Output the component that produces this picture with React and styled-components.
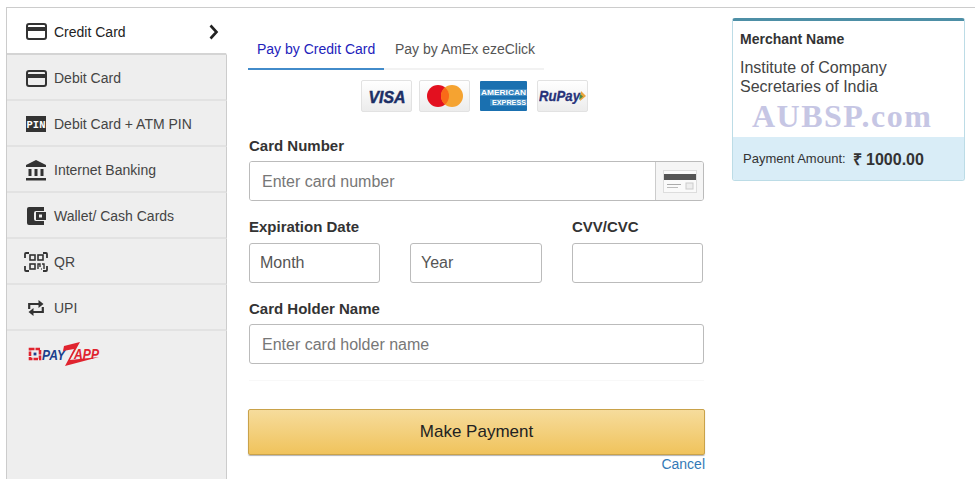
import React from "react"
import styled, { createGlobalStyle } from "styled-components"

const GlobalStyle = createGlobalStyle`
  html, body {
    margin: 0;
    padding: 0;
    height: 479px;
    overflow: hidden;
    background: #fff;
    font-family: "Liberation Sans", Arial, sans-serif;
    color: #333;
  }
  * { box-sizing: border-box; }
`

const CardIcon = () => (
  <svg width="21" height="17" viewBox="0 0 21 17">
    <rect x="1" y="1" width="19" height="15" rx="2" fill="none" stroke="#333" strokeWidth="2" />
    <rect x="1" y="4" width="19" height="4" fill="#333" />
  </svg>
)

const PinIcon = () => (
  <svg width="20" height="16" viewBox="0 0 20 16">
    <rect width="20" height="16" fill="#333" />
    <text x="10" y="12" textAnchor="middle" fill="#fff" fontFamily="Liberation Mono, monospace" fontWeight="700" fontSize="10.5">PIN</text>
  </svg>
)

const BankIcon = () => (
  <svg width="20" height="21" viewBox="0 0 20 21">
    <path d="M10 0 L20 5 V7 H0 V5 Z" fill="#333" />
    <rect x="2.5" y="9" width="3" height="7" fill="#333" />
    <rect x="8.5" y="9" width="3" height="7" fill="#333" />
    <rect x="14.5" y="9" width="3" height="7" fill="#333" />
    <rect x="0" y="18" width="20" height="2.5" fill="#333" />
  </svg>
)

const WalletIcon = () => (
  <svg width="19" height="18" viewBox="0 0 19 18">
    <path d="M2 0 H17 V4 H9 A2 2 0 0 0 7 6 V12 A2 2 0 0 0 9 14 H17 V18 H2 A2 2 0 0 1 0 16 V2 A2 2 0 0 1 2 0 Z" fill="#333" />
    <path d="M9 5 H19 V13 H9 Z M12 7.5 V10.5 H15 V7.5 Z" fill="#333" fillRule="evenodd" />
  </svg>
)

const QrIcon = () => (
  <svg width="24" height="20" viewBox="0 0 24 20" fill="none" stroke="#333">
    <path d="M1 6 V2 Q1 1 2 1 H5 M19 1 H22 Q23 1 23 2 V6 M23 14 V18 Q23 19 22 19 H19 M5 19 H2 Q1 19 1 18 V14" strokeWidth="1.8" />
    <rect x="6" y="3" width="5" height="5" strokeWidth="1.6" />
    <rect x="14" y="3" width="5" height="5" strokeWidth="1.6" />
    <rect x="6" y="12" width="5" height="5" strokeWidth="1.6" />
    <path d="M14 17 V12 H16 V15 M18 12 H20 V17 M17 17 H17.8" strokeWidth="1.4" />
  </svg>
)

const UpiIcon = () => (
  <svg width="16" height="18" viewBox="0 0 16 18">
    <path d="M1.2 10 V5 H11 M14.8 8 V13 H5" fill="none" stroke="#333" strokeWidth="2.2" />
    <path d="M10.5 1 L15.5 5 L10.5 9 Z M5.5 9 L0.5 13 L5.5 17 Z" fill="#333" />
  </svg>
)

const PayZapp = () => (
  <svg width="78" height="24" viewBox="0 0 78 24">
    <rect x="2" y="7" width="10" height="10" fill="none" stroke="#e0232e" strokeWidth="2.6" strokeDasharray="4.5 1" />
    <rect x="5.6" y="10.6" width="2.8" height="2.8" fill="#1d3f8c" />
    <text x="14" y="18" fontFamily="Liberation Sans, sans-serif" fontWeight="700" fontStyle="italic" fontSize="15.5" fill="#1d3f8c" textLength="23" lengthAdjust="spacingAndGlyphs">PAY</text>
    <path d="M36 4 L52 0 L42 18 L71 15 L37 24 L46 7 L35 9 Z" fill="#e0232e" />
    <text x="46" y="16.5" fontFamily="Liberation Sans, sans-serif" fontWeight="700" fontStyle="italic" fontSize="15" fill="#e0232e" textLength="25" lengthAdjust="spacingAndGlyphs">APP</text>
  </svg>
)

const MiniCard = () => (
  <svg width="34" height="24" viewBox="0 0 34 24">
    <rect x="0.5" y="0.5" width="33" height="22" fill="#fafafa" stroke="#ddd" />
    <rect x="1" y="4" width="32" height="6" fill="#555" />
    <rect x="4" y="14" width="14" height="1" fill="#aaa" />
    <rect x="4" y="17" width="11" height="1" fill="#bbb" />
    <rect x="23" y="13" width="7" height="6" fill="#eee" stroke="#ccc" />
  </svg>
)

const VisaLogo = () => (
  <svg width="46" height="20" viewBox="0 0 46 20">
    <text x="23" y="17" textAnchor="middle" fontFamily="Liberation Sans, sans-serif" fontWeight="700" fontStyle="italic" fontSize="17" fill="#1c2f66" stroke="#1c2f66" strokeWidth="0.5" textLength="37" lengthAdjust="spacingAndGlyphs">VISA</text>
  </svg>
)

const MastercardLogo = () => (
  <svg width="38" height="24" viewBox="0 0 38 24">
    <circle cx="12" cy="12" r="11" fill="#e3101f" />
    <circle cx="26" cy="12" r="11" fill="#f5a331" />
    <path d="M19 3.5 A11 11 0 0 1 19 20.5 A11 11 0 0 1 19 3.5 Z" fill="#f96a18" />
  </svg>
)

const AmexLogo = () => (
  <svg width="47" height="30" viewBox="0 0 47 30">
    <rect width="47" height="30" rx="1" fill="#1a70b0" />
    <rect x="0" y="8" width="47" height="7" fill="#3f8cc4" />
    <rect x="10" y="18" width="37" height="7" fill="#3f8cc4" />
    <text x="23.5" y="14" textAnchor="middle" fontFamily="Liberation Sans, sans-serif" fontWeight="700" fontSize="7.5" fill="#fff" textLength="45" lengthAdjust="spacingAndGlyphs">AMERICAN</text>
    <text x="29" y="24" textAnchor="middle" fontFamily="Liberation Sans, sans-serif" fontWeight="700" fontSize="7.5" fill="#fff" textLength="34" lengthAdjust="spacingAndGlyphs">EXPRESS</text>
  </svg>
)

const RupayLogo = () => (
  <svg width="48" height="16" viewBox="0 0 48 16">
    <text x="0" y="13" fontFamily="Liberation Sans, sans-serif" fontWeight="700" fontStyle="italic" fontSize="14" fill="#27327a" stroke="#27327a" strokeWidth="0.3" textLength="41" lengthAdjust="spacingAndGlyphs">RuPay</text>
    <path d="M42 3 L47 8 L41 13 Z" fill="#e9a33c" />
    <path d="M41 6 L44 8.5 L40 12 Z" fill="#4a8a45" />
  </svg>
)

const menu = [
  { label: "Credit Card", icon: <CardIcon />, active: true },
  { label: "Debit Card", icon: <CardIcon /> },
  { label: "Debit Card + ATM PIN", icon: <PinIcon /> },
  { label: "Internet Banking", icon: <BankIcon /> },
  { label: "Wallet/ Cash Cards", icon: <WalletIcon /> },
  { label: "QR", icon: <QrIcon /> },
  { label: "UPI", icon: <UpiIcon /> },
]

const App = () => (
  <>
    <GlobalStyle />
    <Page>
      <Sidebar>
        {menu.map((item) => (
          <MenuItem key={item.label} $active={item.active}>
            <IconSlot>{item.icon}</IconSlot>
            <MenuLabel $active={item.active}>{item.label}</MenuLabel>
            {item.active && (
              <Chevron width="12" height="16" viewBox="0 0 12 16">
                <path d="M2.5 1.5 L8.5 8 L2.5 14.5" fill="none" stroke="#222" strokeWidth="2.6" />
              </Chevron>
            )}
          </MenuItem>
        ))}
        <LogoItem>
          <PayZapp />
        </LogoItem>
        <SidebarRest />
      </Sidebar>

      <Main>
        <Tabs>
          <Tab $active>Pay by Credit Card</Tab>
          <Tab>Pay by AmEx ezeClick</Tab>
        </Tabs>
        <Brands>
          <BrandTile><VisaLogo /></BrandTile>
          <BrandTile><MastercardLogo /></BrandTile>
          <AmexTile><AmexLogo /></AmexTile>
          <BrandTile><RupayLogo /></BrandTile>
        </Brands>

        <Form>
          <Field>
            <Label>Card Number</Label>
            <InputGroup>
              <GroupInput placeholder="Enter card number" />
              <Addon><MiniCard /></Addon>
            </InputGroup>
          </Field>

          <ExpiryRow>
            <ExpiryLabel>Expiration Date</ExpiryLabel>
            <CvvLabel>CVV/CVC</CvvLabel>
            <SelectBox>Month</SelectBox>
            <SelectBox>Year</SelectBox>
            <Input />
          </ExpiryRow>

          <Field>
            <Label>Card Holder Name</Label>
            <Input placeholder="Enter card holder name" $pad />
          </Field>
        </Form>

        <PayButton>Make Payment</PayButton>
        <CancelRow>
          <CancelLink href="#">Cancel</CancelLink>
        </CancelRow>
      </Main>

      <Aside>
        <SummaryBody>
          <MerchantTitle>Merchant Name</MerchantTitle>
          <MerchantName>Institute of Company<br />Secretaries of India</MerchantName>
          <Watermark>AUBSP.com</Watermark>
        </SummaryBody>
        <AmountBar>
          <AmountLabel>Payment Amount:</AmountLabel>
          <AmountValue>₹ 1000.00</AmountValue>
        </AmountBar>
      </Aside>
    </Page>
  </>
)

const Page = styled.div`
  display: flex;
  align-items: flex-start;
  height: 472px;
  margin: 7px 5px 0 6px;
  border-top: 1px solid #ccc;
`

const Sidebar = styled.nav`
  display: flex;
  flex-direction: column;
  flex: none;
  width: 221px;
  height: 100%;
  border-left: 1px solid #ccc;
`

const MenuItem = styled.div`
  display: flex;
  align-items: center;
  gap: 6px;
  height: ${(p) => (p.$active ? "47px" : "46px")};
  padding: 2px 0 0 17px;
  background: ${(p) => (p.$active ? "#fff" : "#eee")};
  border-bottom: 2px solid ${(p) => (p.$active ? "#d4d4d4" : "#e2e2e2")};
  border-right: 1px solid ${(p) => (p.$active ? "#fff" : "#ccc")};
`

const IconSlot = styled.span`
  display: flex;
  flex: none;
  align-items: center;
  justify-content: center;
  width: 24px;
`

const MenuLabel = styled.span`
  font-size: 14px;
  color: ${(p) => (p.$active ? "#222" : "#444")};
`

const Chevron = styled.svg`
  margin-left: auto;
  margin-right: 6px;
`

const LogoItem = styled.div`
  display: flex;
  height: 46px;
  padding: 11px 0 0 21px;
  background: #eee;
  border-right: 1px solid #ccc;
`

const SidebarRest = styled.div`
  flex: 1;
  background: #eee;
  border-right: 1px solid #ccc;
`

const Main = styled.main`
  flex: none;
  width: 457px;
  margin-left: 21px;
  padding-top: 22px;
`

const Tabs = styled.div`
  display: flex;
  width: 296px;
  height: 40px;
  border-bottom: 2px solid #f2f2f2;
`

const Tab = styled.div`
  flex: none;
  width: ${(p) => (p.$active ? "136px" : "auto")};
  height: 40px;
  padding: 11px ${(p) => (p.$active ? "0" : "2px")} 0 ${(p) => (p.$active ? "9px" : "11px")};
  font-size: 14px;
  line-height: 16px;
  white-space: nowrap;
  color: ${(p) => (p.$active ? "#2222bb" : "#555")};
  border-bottom: 2px solid ${(p) => (p.$active ? "#428bca" : "transparent")};
`

const Brands = styled.div`
  display: flex;
  justify-content: flex-end;
  gap: 7px;
  height: 32px;
  margin-top: 10px;
  padding-right: 117px;
`

const BrandTile = styled.div`
  display: flex;
  align-items: center;
  justify-content: center;
  width: 51px;
  height: 32px;
  background: linear-gradient(#fff, #ececec);
  border: 1px solid #e2e2e2;
  border-radius: 2px;
`

const AmexTile = styled(BrandTile)`
  width: 47px;
  margin: 0 3px;
  border: 0;
  background: none;
`

const Form = styled.div`
  display: flex;
  flex-direction: column;
  gap: 16px;
  height: 269px;
  margin: 0 1px;
  padding-top: 24px;
  border-bottom: 1px solid #f8f8f8;
`

const Field = styled.div`
  display: flex;
  flex-direction: column;
  gap: 5px;
`

const Label = styled.label`
  font-size: 15px;
  font-weight: 700;
  line-height: 20px;
  color: #333;
`

const InputGroup = styled.div`
  display: flex;
  height: 40px;
  border: 1px solid #bbb;
  border-radius: 3px;
  overflow: hidden;
`

const Input = styled.input`
  width: 100%;
  height: 40px;
  padding: 2px ${(p) => (p.$pad ? "12px" : "10px")} 0;
  font: 16px "Liberation Sans", Arial, sans-serif;
  color: #555;
  background: #fff;
  border: 1px solid #bbb;
  border-radius: 3px;
  outline: none;
  &::placeholder { color: #777; opacity: 1; }
`

const GroupInput = styled.input`
  flex: 1;
  min-width: 0;
  padding: 2px 12px 0;
  font: 16px "Liberation Sans", Arial, sans-serif;
  border: 0;
  outline: none;
  &::placeholder { color: #777; opacity: 1; }
`

const Addon = styled.div`
  display: flex;
  flex: none;
  align-items: center;
  justify-content: center;
  width: 48px;
  padding-top: 2px;
  background: #f5f5f5;
  border-left: 1px solid #ccc;
`

const ExpiryRow = styled.div`
  display: grid;
  grid-template-columns: 131px 132px 131px;
  column-gap: 30px;
  row-gap: 6px;
`

const ExpiryLabel = styled(Label)`
  grid-column: 1 / 3;
`

const CvvLabel = styled(Label)`
  grid-column: 3;
`

const SelectBox = styled.div`
  height: 40px;
  padding-left: 10px;
  font-size: 16px;
  line-height: 38px;
  color: #555;
  background: #fff;
  border: 1px solid #bbb;
  border-radius: 3px;
`

const PayButton = styled.button`
  display: block;
  width: 457px;
  height: 46px;
  margin-top: 28px;
  font: 17px "Liberation Sans", Arial, sans-serif;
  color: #222;
  background: linear-gradient(#f6dc9c, #f0c35c);
  border: 1px solid #c9a24a;
  border-radius: 2px;
  box-shadow: 0 1px 1px rgba(0, 0, 0, 0.3);
`

const CancelRow = styled.div`
  display: flex;
  justify-content: flex-end;
  margin-top: 1px;
`

const CancelLink = styled.a`
  font-size: 14px;
  line-height: 16px;
  color: #337ab7;
  text-decoration: none;
`

const Aside = styled.aside`
  flex: none;
  width: 233px;
  margin: 10px 0 0 27px;
  border: 1px solid #bcdce6;
  border-top: 3px solid #4d8fa6;
  border-radius: 3px;
  overflow: hidden;
`

const SummaryBody = styled.div`
  height: 116px;
  padding: 10px 7px 0;
`

const MerchantTitle = styled.div`
  font-size: 14px;
  font-weight: 700;
  line-height: 16px;
  color: #333;
`

const MerchantName = styled.div`
  margin-top: 11px;
  font-size: 16px;
  line-height: 19px;
  color: #444;
`

const Watermark = styled.div`
  margin: 2px 0 0 12px;
  font-family: "Liberation Serif", "Times New Roman", serif;
  font-size: 32px;
  font-weight: 700;
  line-height: 36px;
  letter-spacing: 1.5px;
  white-space: nowrap;
  color: #c6c6e4;
`

const AmountBar = styled.div`
  display: flex;
  align-items: center;
  gap: 7px;
  height: 43px;
  padding-left: 10px;
  background: #d9edf7;
`

const AmountLabel = styled.span`
  font-size: 13px;
  color: #333;
`

const AmountValue = styled.span`
  font-size: 16px;
  font-weight: 700;
  color: #333;
`

export default App
